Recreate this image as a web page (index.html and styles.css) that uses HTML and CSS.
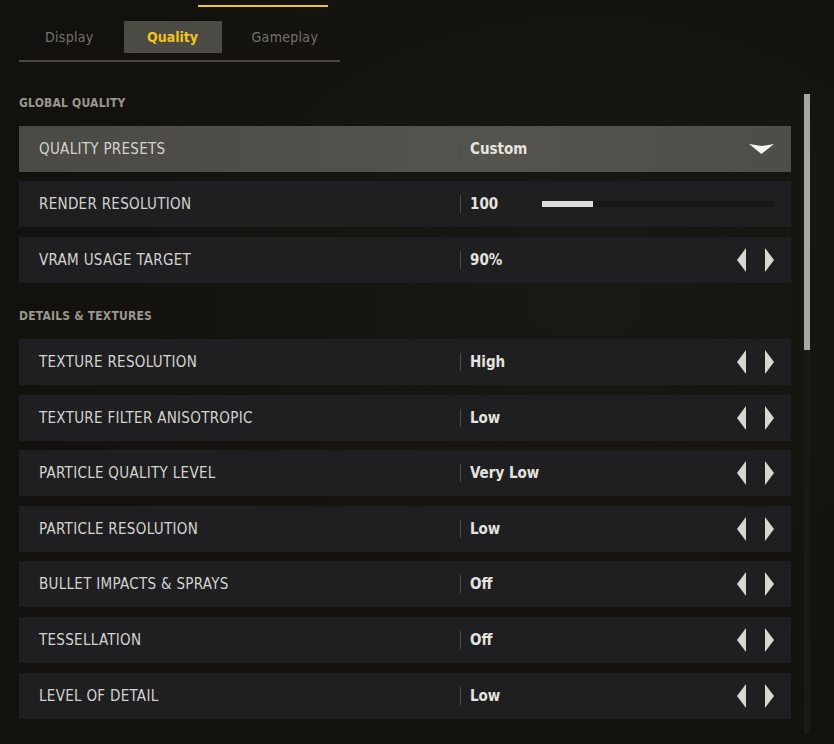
FILE: index.html
```html
<!DOCTYPE html>
<html lang="en">
<head>
    <meta charset="UTF-8">
    <meta name="viewport" content="width=device-width, initial-scale=1.0">
    <title>Settings - Quality</title>

    <link rel="stylesheet" href="styles.css">
</head>
<body>
    <div class="barraTopo"></div>
    <nav class="abas">
        <button class="aba">Display</button>
        <button class="aba ativa">Quality</button>
        <button class="aba">Gameplay</button>
    </nav>

    <main>
        <div id="opcoes">
            <h2 class="secao">GLOBAL QUALITY</h2>

            <div class="linha selecionada">
                <span class="nome">QUALITY PRESETS</span>
                <div class="valor">
                    <span class="texto">Custom</span>
                    <svg class="dropdown" width="25" height="10" viewBox="0 0 25 10"><polygon points="0,0 12.5,2 25,0 12.5,10" fill="#f4f4f0"/></svg>
                </div>
            </div>

            <div class="linha">
                <span class="nome">RENDER RESOLUTION</span>
                <div class="valor">
                    <span class="texto curto">100</span>
                    <div class="slider"><div class="preenchido" style="width: 22%"></div></div>
                </div>
            </div>

            <div class="linha">
                <span class="nome">VRAM USAGE TARGET</span>
                <div class="valor">
                    <span class="texto">90%</span>
                    <div class="setas"><span class="seta esq"></span><span class="seta dir"></span></div>
                </div>
            </div>

            <h2 class="secao">DETAILS &amp; TEXTURES</h2>

            <div class="linha">
                <span class="nome">TEXTURE RESOLUTION</span>
                <div class="valor">
                    <span class="texto">High</span>
                    <div class="setas"><span class="seta esq"></span><span class="seta dir"></span></div>
                </div>
            </div>

            <div class="linha">
                <span class="nome">TEXTURE FILTER ANISOTROPIC</span>
                <div class="valor">
                    <span class="texto">Low</span>
                    <div class="setas"><span class="seta esq"></span><span class="seta dir"></span></div>
                </div>
            </div>

            <div class="linha">
                <span class="nome">PARTICLE QUALITY LEVEL</span>
                <div class="valor">
                    <span class="texto">Very Low</span>
                    <div class="setas"><span class="seta esq"></span><span class="seta dir"></span></div>
                </div>
            </div>

            <div class="linha">
                <span class="nome">PARTICLE RESOLUTION</span>
                <div class="valor">
                    <span class="texto">Low</span>
                    <div class="setas"><span class="seta esq"></span><span class="seta dir"></span></div>
                </div>
            </div>

            <div class="linha">
                <span class="nome">BULLET IMPACTS &amp; SPRAYS</span>
                <div class="valor">
                    <span class="texto">Off</span>
                    <div class="setas"><span class="seta esq"></span><span class="seta dir"></span></div>
                </div>
            </div>

            <div class="linha">
                <span class="nome">TESSELLATION</span>
                <div class="valor">
                    <span class="texto">Off</span>
                    <div class="setas"><span class="seta esq"></span><span class="seta dir"></span></div>
                </div>
            </div>

            <div class="linha">
                <span class="nome">LEVEL OF DETAIL</span>
                <div class="valor">
                    <span class="texto">Low</span>
                    <div class="setas"><span class="seta esq"></span><span class="seta dir"></span></div>
                </div>
            </div>
        </div>

        <div class="scroll">
            <div class="thumb"></div>
        </div>
    </main>
</body>
</html>
```

FILE: styles.css
```css
body{
    margin: 0;
    padding: 5px 0 0 19px;
    height: 100vh;
    box-sizing: border-box;
    overflow: hidden;
    font-family: "DejaVu Sans Condensed", "Liberation Sans", sans-serif;
    background-color: #15130f;
    background-image: radial-gradient(ellipse at 70% 40%, #1a1813 0%, #13110d 70%);
    color: #d6d6d0;
}
.barraTopo{
    width: 130px;
    height: 2px;
    margin-left: 179px;
    background-color: #f2c41c;
}
.abas{
    display: flex;
    gap: 6.5px;
    width: 321px;
    margin-top: 14px;
    padding-left: 2.5px;
    box-sizing: border-box;
    border-bottom: 2px solid #48463f;
    padding-bottom: 7px;
}
.aba{
    border: 0;
    height: 32px;
    padding: 0 23.5px;
    background: none;
    color: #75736d;
    font-family: inherit;
    font-size: 14px;
    letter-spacing: 0.3px;
}
.aba.ativa{
    background-color: #4b4a45;
    color: #f2c41c;
    font-weight: bold;
    letter-spacing: 0;
}
main{
    display: flex;
    gap: 13px;
}
#opcoes{
    width: 772px;
    display: flex;
    flex-direction: column;
    gap: 9.6px;
    padding-top: 31px;
}
.secao{
    margin: 14px 0 3px;
    height: 20px;
    line-height: 20px;
    font-size: 12px;
    font-weight: bold;
    color: #99978f;
    letter-spacing: 0.2px;
}
.secao:first-child{
    margin-top: 0;
    margin-bottom: 3px;
}
.linha{
    display: grid;
    grid-template-columns: 441px 1fr;
    align-items: center;
    height: 46px;
    flex-shrink: 0;
    background-color: #1f1f22;
}
.linha.selecionada{
    background: linear-gradient(90deg, #4a4944, #55534e 60%, #4e4d48);
}
.nome{
    padding-left: 20px;
    font-size: 15px;
    letter-spacing: 0.3px;
    color: #d4d4ce;
}
.valor{
    display: flex;
    align-items: center;
    height: 18px;
    border-left: 1px solid #4c4c50;
    padding: 0 17px 0 9px;
}
.texto{
    flex: 1;
    font-size: 15px;
    font-weight: bold;
    color: #e4e4de;
}
.texto.curto{
    flex: 0 0 72px;
}
.slider{
    flex: 1;
    height: 6px;
    background-color: #18181a;
}
.preenchido{
    height: 100%;
    background-color: #dcdcd8;
}
.setas{
    display: flex;
    gap: 19px;
}
.seta{
    width: 0;
    height: 0;
    border-top: 12.5px solid transparent;
    border-bottom: 12.5px solid transparent;
}
.seta.esq{
    border-right: 9px solid #d8d8d0;
}
.seta.dir{
    border-left: 9px solid #d8d8d0;
}
.dropdown{
    display: block;
}
.scroll{
    width: 6px;
    margin-top: 32px;
    height: 640px;
    background-color: #1b1916;
}
.thumb{
    height: 256px;
    background-color: #a8a8a2;
}
```
